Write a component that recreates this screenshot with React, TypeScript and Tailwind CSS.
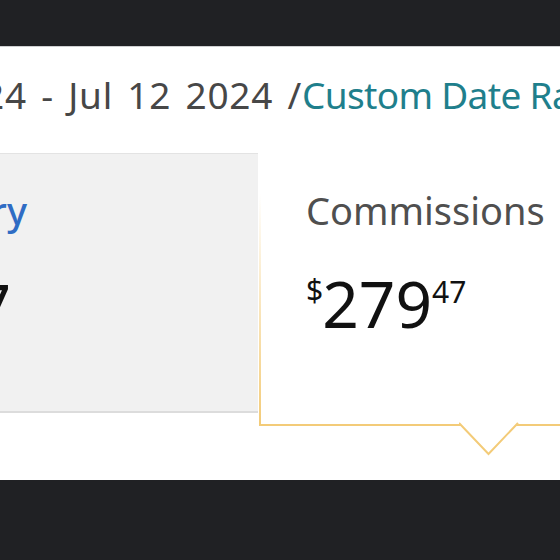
export default function App() {
  return (
    <div className="w-[560px] h-[560px] overflow-hidden bg-[#202124] flex flex-col font-['Noto_Sans',sans-serif]">
      <div className="h-[46px] shrink-0" />
      <div className="h-[434px] shrink-0 bg-white border-t border-[#cfd0d2] pt-[29px] overflow-hidden">
        {/* date range line, clipped at both sides */}
        <div className="flex whitespace-nowrap text-[37px] leading-none">
          <div className="w-[302px] shrink-0 flex justify-end text-[#474747] tracking-[0.02em] [word-spacing:4px]">
            <span>Jun 13 2024 - Jul 12 2024 /</span>
          </div>
          <span className="text-[#1f7f8c] tracking-[-0.018em]">Custom Date Range</span>
        </div>

        <div className="mt-[40px] flex items-start">
          {/* left tile (mostly off screen) */}
          <div className="w-[258px] h-[260px] shrink-0 bg-[#f1f1f1] border-t border-[#e3e3e3] border-b-2 border-b-[#dcdcdc] pt-[37px]">
            <div className="w-[27px] flex justify-end whitespace-nowrap text-[38px] leading-none font-medium text-[#2f6cc4]">
              <span>Summary</span>
            </div>
            <div className="mt-[46px] w-[11px] flex justify-end whitespace-nowrap text-[64px] leading-none text-[#111111]">
              <span>1,127</span>
            </div>
          </div>

          {/* selected tile */}
          <div className="relative ml-px flex-1 h-[273px] bg-white border-b-2 border-b-[#f3cb78] pl-[47px] pt-[38px]">
            <div className="absolute left-0 top-0 -bottom-[2px] w-[1.5px] bg-[linear-gradient(to_bottom,transparent_15%,#f3cb78)]" />
            <div className="text-[38px] leading-none text-[#4f4f4f] whitespace-nowrap">Commissions</div>
            <div className="mt-[43px] flex items-start text-[#111111] leading-none">
              <span className="text-[30px] mt-[3px]">$</span>
              <span className="text-[64px] -ml-[1px]">279</span>
              <span className="text-[30px] mt-[5px]">47</span>
            </div>
            <svg
              className="absolute left-[200px] top-full -mt-[2px]"
              width="60"
              height="35"
              viewBox="0 0 60 35"
            >
              <rect x="1" y="0" width="58" height="2.5" fill="#ffffff" />
              <path d="M0 1 L29.5 32 L59 1" fill="#ffffff" stroke="#f3cb78" strokeWidth="2" />
            </svg>
          </div>
        </div>
      </div>
    </div>
  );
}
